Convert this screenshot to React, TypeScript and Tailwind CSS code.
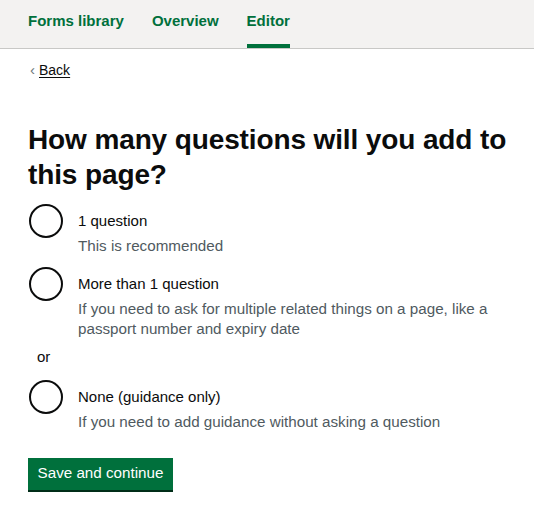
const NAV = [
  { label: "Forms library", active: false },
  { label: "Overview", active: false },
  { label: "Editor", active: true },
]

function Radio({ label, hint }: { label: string; hint: string }) {
  return (
    <div className="flex items-start">
      <span className="ml-px h-[34px] w-[34px] shrink-0 rounded-full border-2 border-[#0b0c0c] bg-white" />
      <div className="ml-[15px] pt-[7px]">
        <p className="text-[15px] leading-[20px] text-[#0b0c0c]">{label}</p>
        <p className="mt-[5px] text-[15.2px] leading-[20px] text-[#505a5f]">{hint}</p>
      </div>
    </div>
  )
}

export default function App() {
  return (
    <div className="min-h-[516px] w-[534px] bg-white font-['Liberation_Sans',Arial,sans-serif] text-[#0b0c0c]">
      <header className="h-[49px] border-b border-[#c8c8c6] bg-[#f3f2f1] px-[28px]">
        <nav className="flex h-full gap-[28px]">
          {NAV.map((n) => (
            <a
              key={n.label}
              className={`flex h-full items-center border-b-4 pb-[2px] text-[15px] font-bold text-[#00703c] ${n.active ? "border-[#00703c]" : "border-transparent"}`}
            >
              {n.label}
            </a>
          ))}
        </nav>
      </header>

      <main className="pl-[28px] pr-[16px]">
        <a className="mt-[12px] flex items-center gap-[4px] pl-[2px] text-[14px] leading-[18px] text-[#0b0c0c]">
          <span className="text-[15px] text-[#6f777b]">‹</span>
          <span className="underline underline-offset-2">Back</span>
        </a>

        <h1 className="mt-[43px] text-[28px] font-bold leading-[35px] tracking-[-0.12px]">
          How many questions will you add to this page?
        </h1>

        <div className="mt-[12px] flex flex-col gap-[11px]">
          <Radio label="1 question" hint="This is recommended" />
          <Radio
            label="More than 1 question"
            hint="If you need to ask for multiple related things on a page, like a passport number and expiry date"
          />
        </div>

        <p className="mt-[8px] pl-[9px] text-[15px] leading-[20px]">or</p>

        <div className="mt-[13px]">
          <Radio label="None (guidance only)" hint="If you need to add guidance without asking a question" />
        </div>

        <button className="mt-[26px] h-[32px] w-[145px] bg-[#00703c] pb-[2px] text-[15.2px] leading-[20px] text-white shadow-[0_2px_0_#002d18]">
          Save and continue
        </button>
      </main>
    </div>
  )
}
